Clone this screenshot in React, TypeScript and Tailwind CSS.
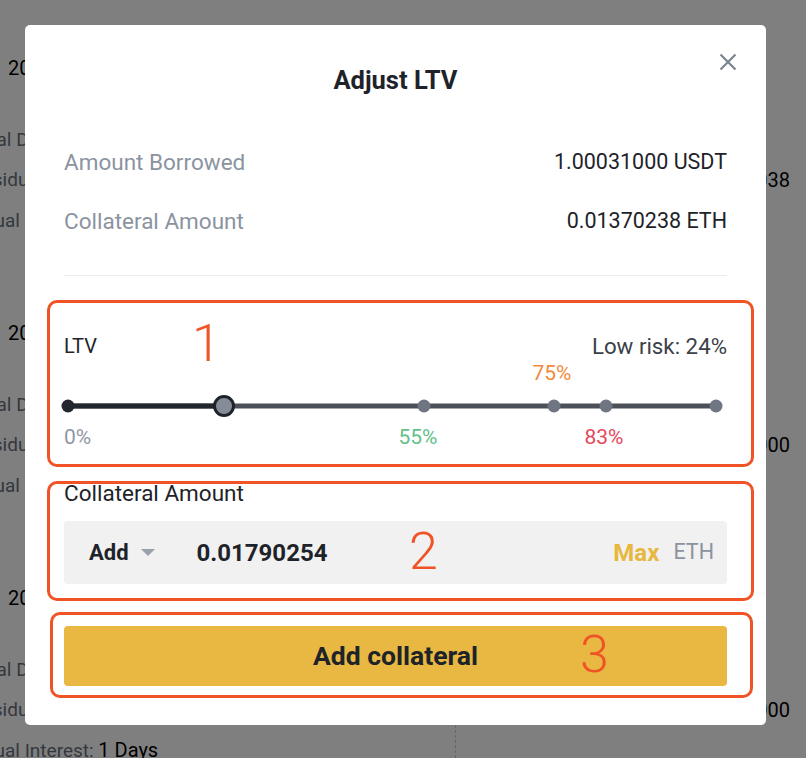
import React from "react";

type Mark = { pct: number; dark?: boolean };
type Label = { text: string; x: number; color: string; center?: boolean };

const marks: Mark[] = [{ pct: 0, dark: true }, { pct: 55 }, { pct: 75 }, { pct: 83 }, { pct: 100 }];

const topLabels: Label[] = [{ text: "75%", x: 484, color: "text-[#f28a3c]", center: true }];

const bottomLabels: Label[] = [
  { text: "0%", x: -4, color: "text-[#8f97a3]" },
  { text: "55%", x: 350, color: "text-[#63bf8a]", center: true },
  { text: "83%", x: 536, color: "text-[#e4495b]", center: true },
];

const cards = [
  { date: "2021-06-18 14:22", value: "0.00000038" },
  { date: "2021-06-17 09:41", value: "0.00000000" },
  { date: "2021-06-15 20:03", value: "0.00000000" },
];

function LabelRow({ labels }: { labels: Label[] }) {
  return (
    <div className="relative h-[26px]">
      {labels.map((l) => (
        <span
          key={l.text}
          className={`absolute top-0 whitespace-nowrap text-[21px] leading-[26px] ${l.color} ${l.center ? "-translate-x-1/2" : ""}`}
          style={{ left: `${l.x}px` }}
        >
          {l.text}
        </span>
      ))}
    </div>
  );
}

function Slider({ value }: { value: number }) {
  return (
    <div className="ml-[4px] mr-[11px]">
      <LabelRow labels={topLabels} />
      <div className="relative mt-[10px] h-[20px]">
        <div className="absolute left-0 right-0 top-1/2 h-[5px] -translate-y-1/2 bg-[#4b5058]" />
        <div className="absolute left-0 top-1/2 h-[5px] -translate-y-1/2 bg-[#22272d]" style={{ width: `${value}%` }} />
        {marks.map((m) => (
          <span
            key={m.pct}
            className={`absolute top-1/2 size-[13px] -translate-x-1/2 -translate-y-1/2 rounded-full ${m.dark ? "bg-[#22272d]" : "bg-[#6f7681]"}`}
            style={{ left: `${m.pct}%` }}
          />
        ))}
        <span
          className="absolute top-1/2 size-[22px] -translate-x-1/2 -translate-y-1/2 rounded-full border-[3px] border-[#1f2328] bg-[#868c97]"
          style={{ left: `${value}%` }}
        />
      </div>
      <div className="mt-[8px]">
        <LabelRow labels={bottomLabels} />
      </div>
    </div>
  );
}

export default function App() {
  return (
    <div className="relative h-[758px] w-[806px] overflow-hidden bg-[#7f7f7f] font-['Roboto',sans-serif]">
      {/* page behind the dialog */}
      <div className="flex flex-col pt-[54px]">
        {cards.map((c, i) => (
          <div key={i} className="flex h-[265px] flex-col">
            <div className="h-[28px] pl-[8px] text-[20px] leading-[28px] text-black">{c.date}</div>
            <div className="mt-[44px] flex flex-col gap-[12px] text-[19px] leading-[28px] text-[#34383e]">
              <div className="-ml-[31px] whitespace-nowrap">Total Duration: 7 Days</div>
              <div className="flex justify-between pr-[16px]">
                <span className="-ml-[29px] whitespace-nowrap">Residual Interest</span>
                <span className="text-[20px] text-black">{c.value}</span>
              </div>
              <div className="-ml-[34px] whitespace-nowrap">
                Actual Interest: <span className="text-[20px] text-black">1 Days</span>
              </div>
            </div>
          </div>
        ))}
      </div>
      <div className="absolute bottom-0 left-[455px] top-[700px] border-l border-dashed border-[#666]" />

      {/* dialog */}
      <div className="absolute left-[25px] top-[25px] flex h-[700px] w-[741px] flex-col rounded-[5px] bg-white px-[39px] pt-[40px]">
        <button className="absolute right-[29px] top-[28px] text-[#7b838f]">
          <svg width="18" height="18" viewBox="0 0 18 18" fill="none" stroke="currentColor" strokeWidth="2.2">
            <path d="M1.5 1.5 16.5 16.5M16.5 1.5 1.5 16.5" />
          </svg>
        </button>

        <h2 className="text-center text-[25.5px] font-bold leading-[30px] text-[#1e2329]">Adjust LTV</h2>

        <div className="mt-[52px] flex flex-col gap-[29px] text-[21.5px] leading-[30px]">
          <div className="flex justify-between">
            <span className="text-[22.5px] text-[#8b939f]">Amount Borrowed</span>
            <span className="text-[#1e2329]">1.00031000 USDT</span>
          </div>
          <div className="flex justify-between">
            <span className="text-[22.5px] text-[#8b939f]">Collateral Amount</span>
            <span className="text-[#1e2329]">0.01370238 ETH</span>
          </div>
        </div>

        <div className="mt-[39px] h-px bg-[#eaecef]" />

        {/* LTV */}
        <div className="relative mt-[56px]">
          <div className="pointer-events-none absolute -bottom-[17px] -left-[17px] -right-[27px] -top-[32px] rounded-[10px] border-[3px] border-[#ef5326]" />
          <span className="absolute -top-[14px] left-[128px] text-[52px] font-light leading-none text-[#ef5326]">1</span>
          <div className="flex justify-between text-[20px] leading-[28px]">
            <span className="text-[#1e2329]">LTV</span>
            <span className="text-[22.3px] text-[#3c4148]">Low risk: 24%</span>
          </div>
          <Slider value={24} />
        </div>

        {/* collateral input */}
        <div className="relative mt-[29px]">
          <div className="pointer-events-none absolute -bottom-[17px] -left-[17px] -right-[27px] top-[2px] rounded-[10px] border-[3px] border-[#ef5326]" />
          <span className="absolute left-[345px] top-[47px] text-[52px] font-light leading-none text-[#ef5326]">2</span>
          <div className="text-[22.5px] leading-[28px] text-[#1e2329]">Collateral Amount</div>
          <div className="mt-[14px] flex h-[63px] items-center rounded-[4px] bg-[#f1f1f1] pl-[25px] pr-[13px]">
            <span className="text-[22px] font-bold text-[#1e2329]">Add</span>
            <svg className="ml-[12px]" width="14" height="8" viewBox="0 0 14 8">
              <path d="M0 0h14L7 7z" fill="#9aa1ab" />
            </svg>
            <span className="ml-[42px] flex-1 text-[24px] font-bold text-[#1e2329]">0.01790254</span>
            <span className="text-[24px] font-bold text-[#e8b73e]">Max</span>
            <span className="ml-[14px] text-[21.5px] text-[#8b939f]">ETH</span>
          </div>
        </div>

        {/* submit */}
        <div className="relative mt-[42px]">
          <div className="pointer-events-none absolute -bottom-[12px] -left-[14px] -right-[26px] -top-[14px] rounded-[10px] border-[3px] border-[#ef5326]" />
          <button className="flex h-[60px] w-full items-center justify-center rounded-[4px] bg-[#e8b842] text-[26.5px] font-bold text-[#1e2329]">
            Add collateral
          </button>
          <span className="absolute left-[516px] top-[3px] text-[52px] font-light leading-none text-[#ef5326]">3</span>
        </div>
      </div>
    </div>
  );
}
